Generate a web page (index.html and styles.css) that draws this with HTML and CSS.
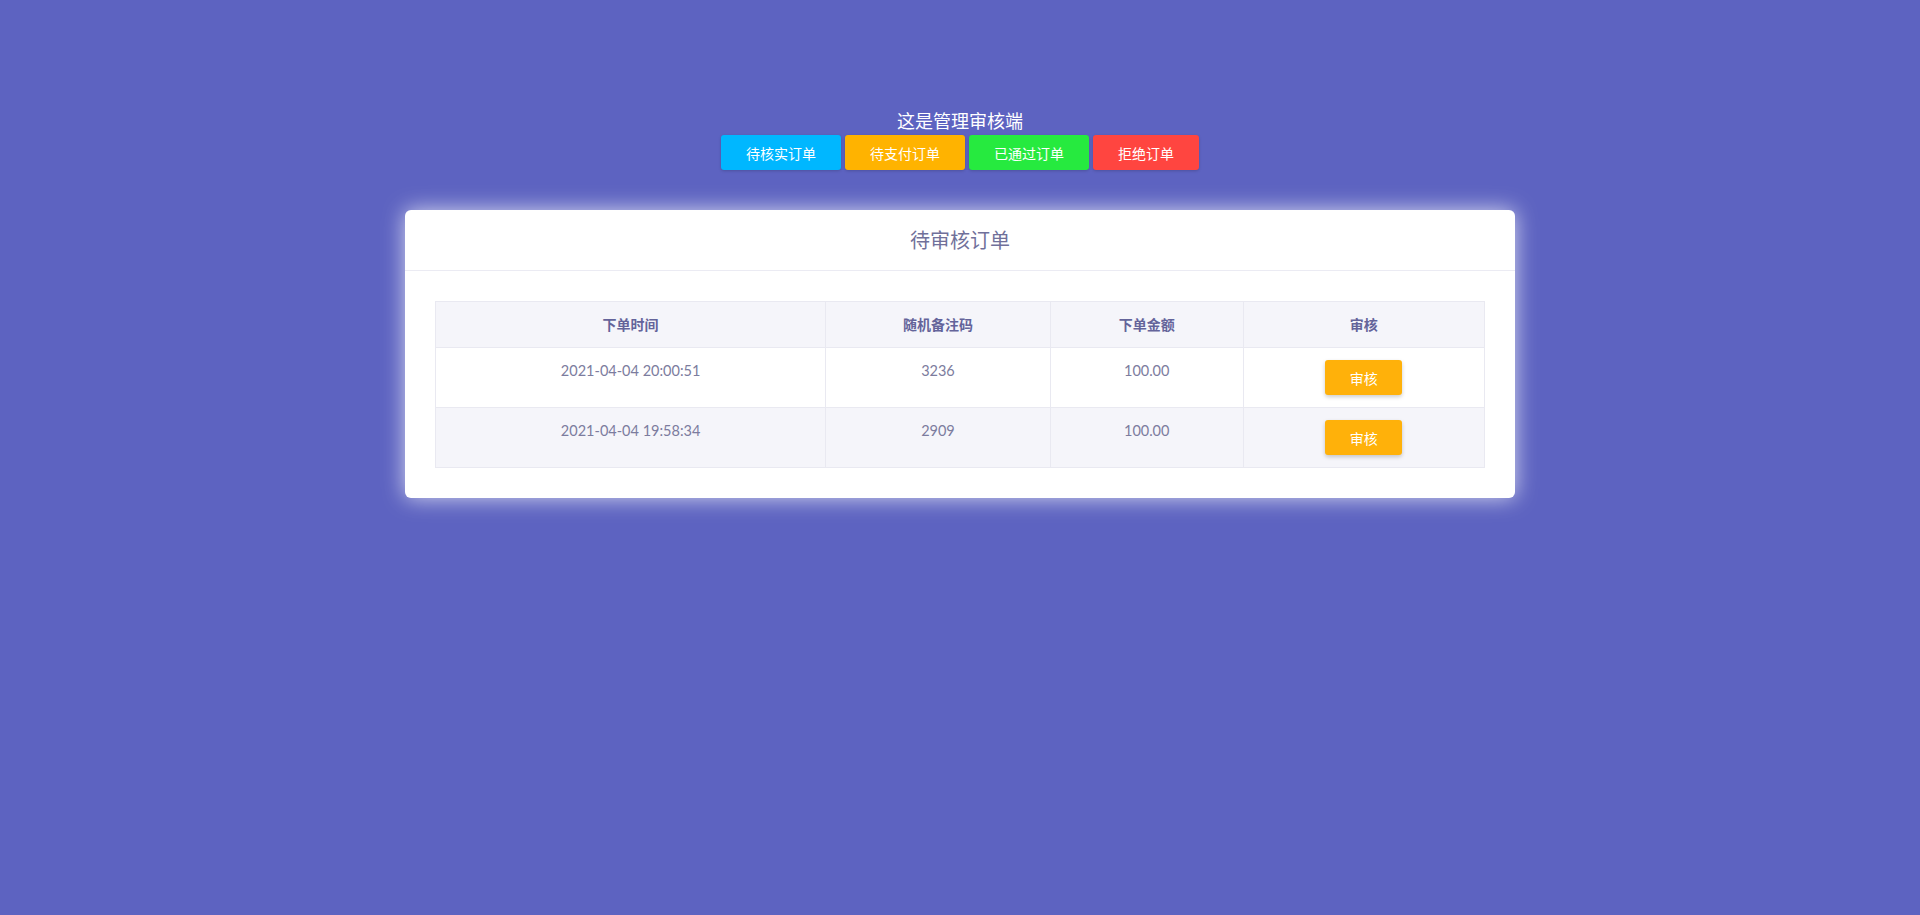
FILE: index.html
```html
<!DOCTYPE html>
<html lang="zh">
<head>
<meta charset="utf-8">
<title>管理审核端</title>
<link rel="stylesheet" href="styles.css">
</head>
<body>
<div class="page">
  <div class="top">
    <div class="site-title">这是管理审核端</div>
    <div class="nav">
      <button class="nav-btn nav-cyan">待核实订单</button>
      <button class="nav-btn nav-orange">待支付订单</button>
      <button class="nav-btn nav-green">已通过订单</button>
      <button class="nav-btn nav-red">拒绝订单</button>
    </div>
  </div>
  <div class="card">
    <div class="card-header">待审核订单</div>
    <div class="card-body">
      <table class="orders">
        <colgroup>
          <col class="c1"><col class="c2"><col class="c3"><col class="c4">
        </colgroup>
        <thead>
          <tr><th>下单时间</th><th>随机备注码</th><th>下单金额</th><th>审核</th></tr>
        </thead>
        <tbody>
          <tr><td>2021-04-04 20:00:51</td><td>3236</td><td>100.00</td><td><button class="audit-btn">审核</button></td></tr>
          <tr class="alt"><td>2021-04-04 19:58:34</td><td>2909</td><td>100.00</td><td><button class="audit-btn">审核</button></td></tr>
        </tbody>
      </table>
    </div>
  </div>
</div>
</body>
</html>
```

FILE: styles.css
```css
html, body {
  margin: 0;
  padding: 0;
}
body {
  background: #5d63c1;
  font-family: Lato, "Noto Sans CJK SC", sans-serif;
  min-height: 915px;
}
.page {
  padding-top: 108px;
}
.top {
  display: flex;
  flex-direction: column;
  align-items: center;
}
.site-title {
  color: #ffffff;
  font-size: 18px;
  line-height: 26px;
  margin-bottom: 1px;
}
.nav {
  display: flex;
  gap: 4px;
}
.nav-btn {
  height: 35px;
  padding: 0 25px;
  border: none;
  border-radius: 3px;
  color: #fff;
  font-family: Lato, "Noto Sans CJK SC", sans-serif;
  font-size: 14px;
  box-shadow: 0 1px 3px rgba(0,0,0,0.18);
}
.nav-cyan { background: #00b7ff; }
.nav-orange { background: #ffb300; }
.nav-green { background: #26ea3f; }
.nav-red { background: #ff4540; }

.card {
  width: 1110px;
  margin: 40px auto 0;
  background: #fff;
  border-radius: 6px;
  box-shadow: 0 0 22px rgba(255,255,255,0.75);
}
.card-header {
  height: 60px;
  line-height: 60px;
  text-align: center;
  font-size: 20px;
  color: #70709a;
  border-bottom: 1px solid #ebebf3;
}
.card-body {
  padding: 30px;
}
.orders {
  width: 100%;
  border-collapse: collapse;
  font-size: 14.5px;
}
.c1 { width: 37.2%; }
.c2 { width: 21.4%; }
.c3 { width: 18.4%; }
.c4 { width: 23%; }
.orders th, .orders td {
  border: 1px solid #e9e9f1;
  padding: 12px;
  text-align: center;
  vertical-align: top;
  line-height: 21px;
}
.orders th {
  background: #f5f5fa;
  font-size: 14px;
  font-weight: bold;
  color: #64649a;
}
.orders td {
  color: #7c7c9e;
}
.orders tr.alt td {
  background: #f5f5fa;
}
.audit-btn {
  width: 77px;
  height: 35px;
  border: none;
  border-radius: 3px;
  background: #ffb10a;
  color: #fff;
  font-family: Lato, "Noto Sans CJK SC", sans-serif;
  font-size: 14px;
  box-shadow: 0 2px 4px rgba(0,0,0,0.2);
  vertical-align: top;
}
```
